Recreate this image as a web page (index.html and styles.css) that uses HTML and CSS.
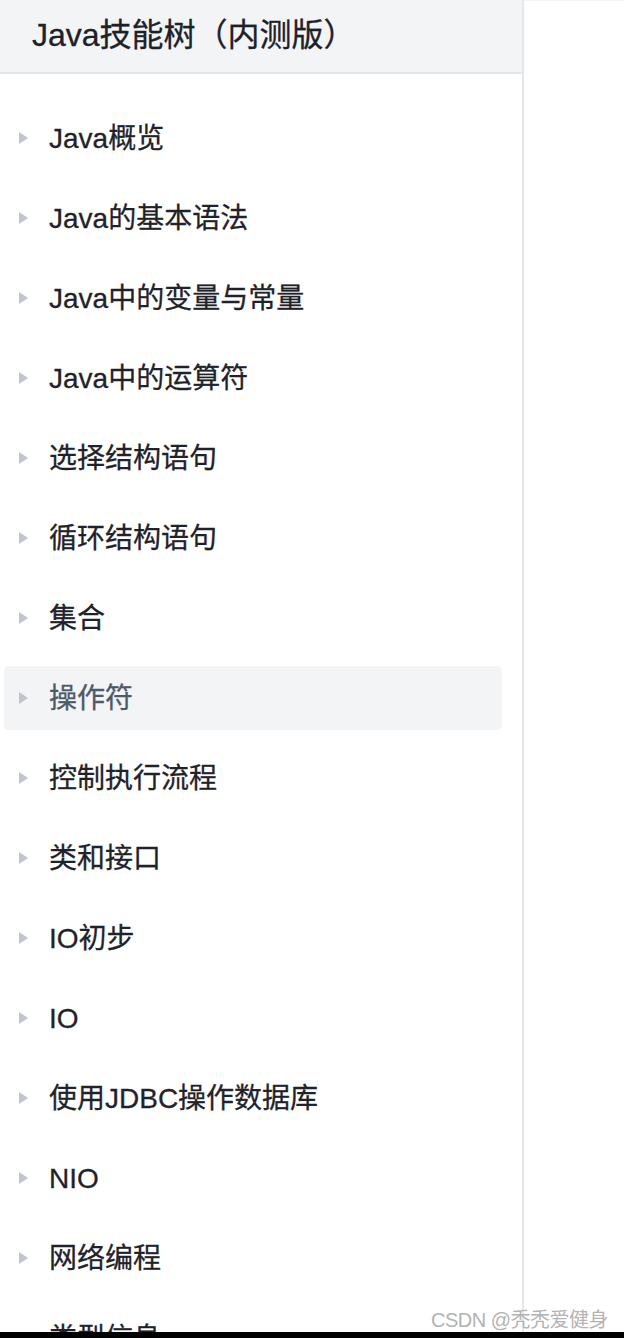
FILE: index.html
```html
<!DOCTYPE html>
<html lang="zh">
<head>
<meta charset="utf-8">
<title>Java技能树（内测版）</title>
<link rel="stylesheet" href="styles.css">
</head>
<body>
<div class="page">
  <aside class="sidebar">
    <div class="sidebar-header"><span class="title">Java技能树（内测版）</span></div>
    <ul class="tree">
      <li class="node"><svg class="caret" viewBox="0 0 9 12"><path d="M0 0 L9 6 L0 12 Z"/></svg><span class="label">Java概览</span></li>
      <li class="node"><svg class="caret" viewBox="0 0 9 12"><path d="M0 0 L9 6 L0 12 Z"/></svg><span class="label">Java的基本语法</span></li>
      <li class="node"><svg class="caret" viewBox="0 0 9 12"><path d="M0 0 L9 6 L0 12 Z"/></svg><span class="label">Java中的变量与常量</span></li>
      <li class="node"><svg class="caret" viewBox="0 0 9 12"><path d="M0 0 L9 6 L0 12 Z"/></svg><span class="label">Java中的运算符</span></li>
      <li class="node"><svg class="caret" viewBox="0 0 9 12"><path d="M0 0 L9 6 L0 12 Z"/></svg><span class="label">选择结构语句</span></li>
      <li class="node"><svg class="caret" viewBox="0 0 9 12"><path d="M0 0 L9 6 L0 12 Z"/></svg><span class="label">循环结构语句</span></li>
      <li class="node"><svg class="caret" viewBox="0 0 9 12"><path d="M0 0 L9 6 L0 12 Z"/></svg><span class="label">集合</span></li>
      <li class="node node-hover"><svg class="caret" viewBox="0 0 9 12"><path d="M0 0 L9 6 L0 12 Z"/></svg><span class="label">操作符</span></li>
      <li class="node"><svg class="caret" viewBox="0 0 9 12"><path d="M0 0 L9 6 L0 12 Z"/></svg><span class="label">控制执行流程</span></li>
      <li class="node"><svg class="caret" viewBox="0 0 9 12"><path d="M0 0 L9 6 L0 12 Z"/></svg><span class="label">类和接口</span></li>
      <li class="node"><svg class="caret" viewBox="0 0 9 12"><path d="M0 0 L9 6 L0 12 Z"/></svg><span class="label">IO初步</span></li>
      <li class="node"><svg class="caret" viewBox="0 0 9 12"><path d="M0 0 L9 6 L0 12 Z"/></svg><span class="label">IO</span></li>
      <li class="node"><svg class="caret" viewBox="0 0 9 12"><path d="M0 0 L9 6 L0 12 Z"/></svg><span class="label">使用JDBC操作数据库</span></li>
      <li class="node"><svg class="caret" viewBox="0 0 9 12"><path d="M0 0 L9 6 L0 12 Z"/></svg><span class="label">NIO</span></li>
      <li class="node"><svg class="caret" viewBox="0 0 9 12"><path d="M0 0 L9 6 L0 12 Z"/></svg><span class="label">网络编程</span></li>
      <li class="node"><svg class="caret" viewBox="0 0 9 12"><path d="M0 0 L9 6 L0 12 Z"/></svg><span class="label">类型信息</span></li>
    </ul>
  </aside>
  <main class="content"></main>
</div>
<div class="watermark">CSDN @秃秃爱健身</div>
<div class="bottom-bar"></div>
</body>
</html>
```
FILE: styles.css
```css
html, body {
  margin: 0;
  padding: 0;
  height: 1338px;
  overflow: hidden;
  background: #ffffff;
  font-family: "Liberation Sans", "Noto Sans CJK SC", sans-serif;
}

.page {
  display: flex;
  height: 1338px;
}

.sidebar {
  width: 522px;
  flex: none;
  border-right: 2px solid #e6e7eb;
  box-sizing: content-box;
  overflow: hidden;
}

.sidebar-header {
  height: 74px;
  display: flex;
  align-items: center;
  padding-left: 32px;
  padding-bottom: 3px;
  box-sizing: border-box;
  background: #f3f4f6;
  border-bottom: 2px solid #e5e6ea;
  font-size: 32px;
  color: #1d2129;
}

.title {
  line-height: 1;
  -webkit-text-stroke: 0.3px #1d2129;
}

.tree {
  list-style: none;
  margin: 0;
  padding: 32px 20px 0 4px;
  display: flex;
  flex-direction: column;
  gap: 16px;
}

.node {
  height: 64px;
  display: flex;
  align-items: center;
  padding-left: 15px;
  border-radius: 5px;
  font-size: 28px;
  color: #1f2329;
}

.node-hover {
  background: #f3f4f6;
  color: #4e5969;
}

.caret {
  width: 9px;
  height: 12px;
  fill: #c0c4cc;
  flex: none;
  margin-right: 21px;
}

.label {
  line-height: 1;
  padding-top: 2px;
  -webkit-text-stroke: 0.3px currentColor;
}

.content {
  flex: 1;
  border-top: 1px solid #f6f6f6;
}

.watermark {
  position: absolute;
  right: 16px;
  top: 1304px;
  font-family: "Liberation Sans", "Noto Sans CJK SC", sans-serif;
  font-size: 20px;
  color: #b3b3b3;
  letter-spacing: -0.5px;
}

.bottom-bar {
  position: absolute;
  left: 0;
  right: 0;
  top: 1332px;
  height: 6px;
  background: #000000;
}
```
